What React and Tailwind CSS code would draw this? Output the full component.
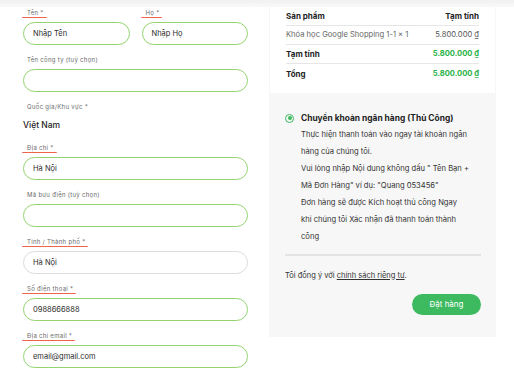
const font = { fontFamily: '"Inter", "Liberation Sans", sans-serif' };

const Label = ({ text, marked }) => (
  <div className="h-[9px] leading-[8px] text-[6px] tracking-[0.3px] text-[#6b6b6b]">
    {marked ? (
      <span className="inline-block h-[9px] -ml-[5px] pl-[5px] pr-[3px] border-b-[1.5px] border-[#f0644a] rounded-[1px]">
        {text}
      </span>
    ) : (
      <span>{text}</span>
    )}
  </div>
);

const Field = ({ label, marked, value, grey }) => (
  <div className="flex flex-col gap-[4px] w-full">
    <div className="pl-[4px]">
      <Label text={label} marked={marked} />
    </div>
    <div
      className={`h-[23px] rounded-full border-[1.5px] flex items-center pl-[9px] text-[7.5px] text-[#2b2b2b] ${
        grey ? 'border-[#dcdcdc]' : 'border-[#93d46f]'
      }`}
    >
      {value}
    </div>
  </div>
);

const Row = ({ left, right, bold, green, border }) => (
  <div
    className={`h-[19px] flex items-center justify-between ${border ? 'border-b border-[#e6e6e6]' : ''}`}
  >
    <span className={bold ? 'font-bold text-[#222] text-[8px]' : 'text-[#666] text-[7.6px]'}>{left}</span>
    <span
      className={`text-[7.6px] ${green ? 'font-bold text-[#2db34a]' : bold ? 'font-bold text-[#222] text-[8px]' : 'text-[#555]'}`}
    >
      {right}
    </span>
  </div>
);

export default function App() {
  return (
    <div className="w-[514px] h-[380px] bg-white overflow-hidden" style={font}>
      <div className="h-[7px] bg-gradient-to-b from-[#f1f1f1] to-[#f9f9f9]" />
      <div className="flex">
        {/* billing form */}
        <div className="w-[269px] pl-[23px] pr-[21px] pt-[2px] flex flex-col gap-[11px]">
          <div className="flex gap-[12px]">
            <Field label="Tên *" marked value="Nhập Tên" />
            <Field label="Họ *" marked value="Nhập Họ" />
          </div>
          <Field label="Tên công ty (tuỳ chọn)" value="" />
          <div className="flex flex-col gap-[7px] mb-[2px]">
            <div className="pl-[4px]">
              <Label text="Quốc gia/Khu vực *" />
            </div>
            <div className="h-[12px] leading-[12px] text-[8.5px] font-medium text-[#222]">Việt Nam</div>
          </div>
          <Field label="Địa chỉ *" marked value="Hà Nội" />
          <Field label="Mã bưu điện (tuỳ chọn)" value="" />
          <Field label="Tỉnh / Thành phố *" marked value="Hà Nội" grey />
          <Field label="Số điện thoại *" marked value="0988666888" />
          <Field label="Địa chỉ email *" marked value="email@gmail.com" />
        </div>

        {/* order summary */}
        <div className="w-[227px] h-[330px] bg-[#f7f7f7] flex flex-col">
          <div className="bg-white mx-px pl-[16px] pr-[16px] pb-[10px]">
            <Row left="Sản phẩm" right="Tạm tính" bold border />
            <Row left="Khóa học Google Shopping 1-1  × 1" right="5.800.000 ₫" border />
            <Row left="Tạm tính" right="5.800.000 ₫" bold green border />
            <Row left="Tổng" right="5.800.000 ₫" bold green />
          </div>
          <div className="pl-[16px] pr-[15px] pt-[17px]">
            <div className="flex items-center gap-[7px] h-[16px]">
              <span className="w-[9px] h-[9px] rounded-full border-[1.5px] border-[#3cb95c] flex items-center justify-center">
                <span className="w-[4px] h-[4px] rounded-full bg-[#3cb95c]" />
              </span>
              <span className="font-bold text-[8.4px] text-[#222]">Chuyển khoản ngân hàng (Thủ Công)</span>
            </div>
            <div className="pl-[16px] text-[7.6px] leading-[17px] text-[#333] whitespace-nowrap">
              <div>Thực hiện thanh toán vào ngay tài khoản ngân</div>
              <div>hàng của chúng tôi.</div>
              <div>Vui lòng nhập Nội dung không dấu " Tên Bạn +</div>
              <div>Mã Đơn Hàng" ví dụ: "Quang 053456"</div>
              <div>Đơn hàng sẽ được Kích hoạt thủ công Ngay</div>
              <div>khi chúng tôi Xác nhận đã thanh toán thành</div>
              <div>công</div>
            </div>
            <div className="mt-[9px] h-[1.5px] bg-[#e3e3e3]" />
            <div className="mt-[13px] h-[14px] leading-[14px] text-[7.5px] text-[#333]">
              Tôi đồng ý với <span className="underline">chính sách riêng tư</span>.
            </div>
            <div className="mt-[11px] flex justify-end">
              <button className="w-[69px] h-[21px] rounded-full bg-[#3dba5f] text-white text-[8px]">
                Đặt hàng
              </button>
            </div>
          </div>
        </div>
      </div>
    </div>
  );
}
